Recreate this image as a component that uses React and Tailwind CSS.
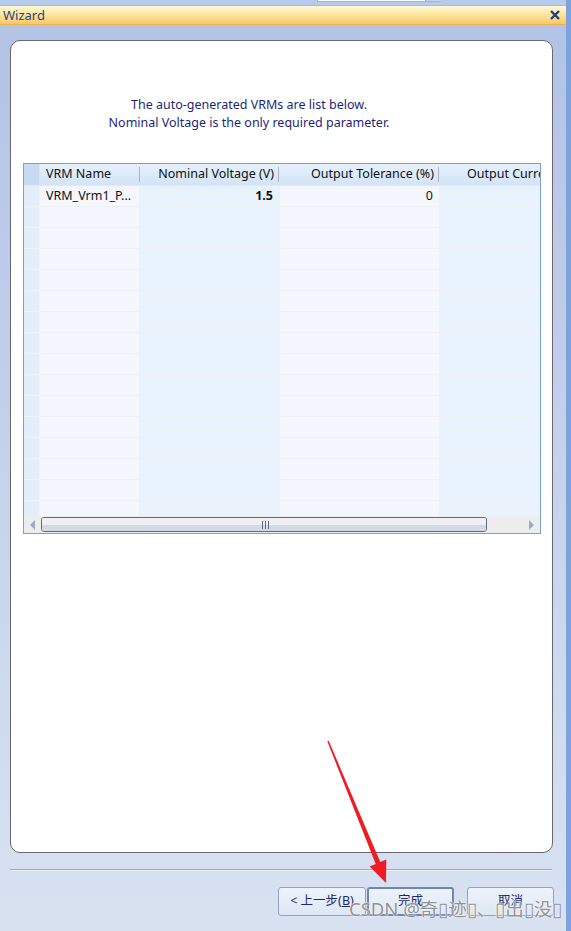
import React from "react";

const F = { fontFamily: '"Noto Sans", "Noto Sans CJK SC", sans-serif' };

function Row({ first }) {
  return (
    <div className="flex h-[21px] shrink-0">
      <div className="w-[16px] h-full bg-[#e4eefa] border-b border-r border-[#f0f2f5]" />
      <div className="w-[100px] h-full bg-[#f4f8fe] border-b border-r border-[#eef0f2] flex items-center pl-[6px] text-[12.5px] text-[#111] whitespace-nowrap overflow-hidden">
        {first ? "VRM_Vrm1_P..." : ""}
      </div>
      <div className="w-[140px] h-full bg-[#e9f3fd] border-b border-r border-[#eef0f2] flex items-center justify-end pr-[6px] text-[12.5px] font-bold text-[#111]">
        {first ? "1.5" : ""}
      </div>
      <div className="w-[160px] h-full bg-[#f4f8fe] border-b border-r border-[#eef0f2] flex items-center justify-end pr-[6px] text-[12.5px] text-[#111]">
        {first ? "0" : ""}
      </div>
      <div className="w-[100px] h-full bg-[#e9f3fd] border-b border-[#eef0f2]" />
    </div>
  );
}

export default function App() {
  const rows = Array.from({ length: 16 });
  return (
    <div className="w-[571px] h-[931px] relative overflow-hidden flex bg-[#b4c4e6]" style={F}>
      <div className="w-[566px] h-full flex flex-col">
        {/* top strip */}
        <div className="h-[5px] shrink-0 bg-[#b5cbec] relative">
          <div className="absolute left-[317px] top-0 w-[109px] h-[2px] bg-white border-x border-b border-[#9fb4d6]" />
          <div className="absolute left-[426px] top-0 w-[15px] h-[2px] bg-[#c9d6ea] border-b border-[#9fb4d6]" />
        </div>
        {/* title bar */}
        <div className="h-[20px] shrink-0 flex items-center justify-between border-y border-[#f0b24c] bg-gradient-to-b from-[#fff8d6] via-[#fde49a] to-[#f9c766] pl-[3px] pr-[6px]">
          <span className="text-[13px] text-[#24467f] leading-none">Wizard</span>
          <svg width="10" height="10" viewBox="0 0 10 10">
            <path d="M1 1 L9 9 M9 1 L1 9" stroke="#1f3f86" strokeWidth="2.4" />
          </svg>
        </div>
        {/* body */}
        <div className="flex-1 flex flex-col bg-gradient-to-b from-[#b3c3e5] to-[#d8e2f1] pt-[15px]">
          <div className="ml-[10px] w-[543px] h-[813px] shrink-0 bg-white border border-[#666a70] rounded-[10px] flex flex-col pt-[55px]">
            <div className="w-[476px] text-center text-[12.5px] leading-[18px] text-[#251f78]">
              <div>The auto-generated VRMs are list below.</div>
              <div>Nominal Voltage is the only required parameter.</div>
            </div>
            {/* grid */}
            <div className="ml-[12px] mt-[31px] w-[518px] h-[371px] border border-[#7b9fd6] flex flex-col overflow-hidden">
              <div className="h-[22px] shrink-0 flex bg-gradient-to-b from-[#e6f0fb] to-[#d3e4f7] text-[12.5px] text-[#111] border-b border-[#dfe8f3]">
                <div className="w-[16px] h-full bg-[#c8daf1] border-r border-[#d8e4f2]" />
                <div className="w-[100px] h-full flex items-center justify-between pl-[6px]">
                  <span>VRM Name</span>
                  <span className="w-px h-[15px] bg-[#a9b4c6]" />
                </div>
                <div className="w-[140px] h-full flex items-center justify-end">
                  <span className="pr-[4px] whitespace-nowrap">Nominal Voltage (V)</span>
                  <span className="w-px h-[15px] bg-[#a9b4c6] mr-[1px]" />
                </div>
                <div className="w-[160px] h-full flex items-center justify-end">
                  <span className="pr-[4px] whitespace-nowrap">Output Tolerance (%)</span>
                  <span className="w-px h-[15px] bg-[#a9b4c6] mr-[1px]" />
                </div>
                <div className="w-[100px] h-full flex items-center pl-[27px] whitespace-nowrap overflow-hidden">
                  Output Current
                </div>
              </div>
              <div className="flex-1 flex flex-col overflow-hidden">
                {rows.map((_, i) => (
                  <Row key={i} first={i === 0} />
                ))}
              </div>
              {/* horizontal scrollbar */}
              <div className="h-[17px] shrink-0 bg-[#ededed] flex items-center">
                <div className="w-[17px] flex justify-center">
                  <svg width="6" height="10" viewBox="0 0 6 10">
                    <path d="M5 0 L0 5 L5 10 Z" fill="#9aabcb" />
                  </svg>
                </div>
                <div className="w-[446px] h-[15px] rounded-[3px] border border-[#5e6b84] flex flex-col overflow-hidden relative">
                  <div className="flex-1 bg-[#eef0f4]" />
                  <div className="flex-1 bg-[#d3dae5]" />
                  <div className="absolute left-[220px] top-[3px] flex gap-[2px]">
                    <span className="w-px h-[8px] bg-[#5b6a92]" />
                    <span className="w-px h-[8px] bg-[#5b6a92]" />
                    <span className="w-px h-[8px] bg-[#5b6a92]" />
                  </div>
                </div>
                <div className="flex-1" />
                <div className="w-[18px] flex justify-center">
                  <svg width="6" height="10" viewBox="0 0 6 10">
                    <path d="M1 0 L6 5 L1 10 Z" fill="#9aabcb" />
                  </svg>
                </div>
              </div>
            </div>
          </div>
          {/* separator */}
          <div className="ml-[10px] w-[542px] mt-[16px] border-t border-[#a7a9ad] border-b border-b-[#e9eef6]" />
          {/* buttons */}
          <div className="flex justify-end pr-[12px] mt-[16px]">
            <button className="w-[88px] h-[29px] rounded-[3px] border border-[#8aa3c9] bg-gradient-to-b from-[#eef3fb] to-[#dde7f5] text-[12.5px] text-[#1b2a6b]">
              &lt; 上一步(<span className="underline">B</span>)
            </button>
            <button className="ml-[1px] w-[87px] h-[29px] rounded-[3px] border-2 border-[#6d88b8] bg-gradient-to-b from-[#eef3fb] to-[#dde7f5] text-[12.5px] text-[#1b2a6b]">
              完成
            </button>
            <button className="ml-[13px] w-[87px] h-[29px] rounded-[3px] border border-[#8aa3c9] bg-gradient-to-b from-[#eef3fb] to-[#dde7f5] text-[12.5px] text-[#1b2a6b]">
              取消
            </button>
          </div>
        </div>
      </div>
      <div className="w-[5px] h-full bg-[#7ea2dc]" />

      {/* red arrow overlay */}
      <svg className="absolute left-0 top-0 pointer-events-none" width="571" height="931">
        <polygon
          points="327.3,741.3 328.7,740.7 380.3,862.05 386.3,859.6 386,883 369.7,866.4 375.7,863.95"
          fill="#ee1c24"
        />
      </svg>
      {/* watermark */}
      <div
        className="absolute left-[349px] top-[897px] text-[18.5px] leading-[24px] text-[#929292] whitespace-nowrap pointer-events-none"
        style={{ textShadow: "0 0 2px #fff, 0 0 1px #fff" }}
      >
        CSDN @奇▯迹▯、▯出▯没▯
      </div>
    </div>
  );
}
